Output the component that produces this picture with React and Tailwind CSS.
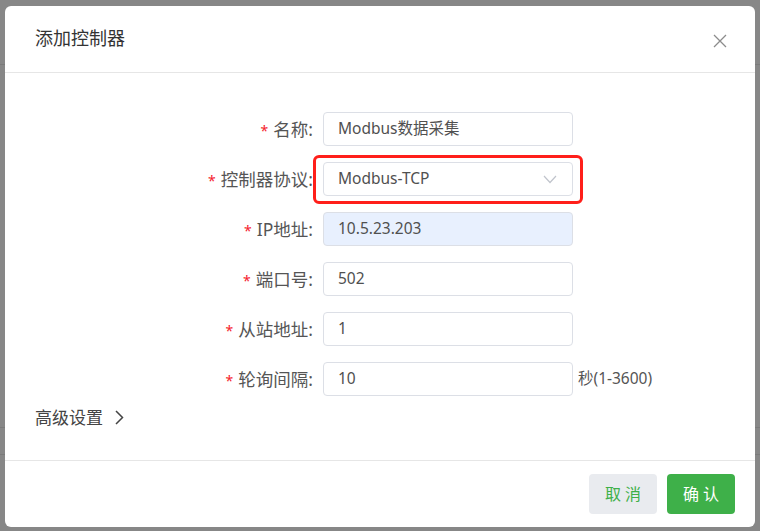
import React from 'react'

const font = { fontFamily: '"Noto Sans", "Noto Sans CJK SC", sans-serif' }

const rows = [
  { label: '名称', value: 'Modbus数据采集' },
  { label: '控制器协议', value: 'Modbus-TCP', select: true },
  { label: 'IP地址', value: '10.5.23.203', filled: true },
  { label: '端口号', value: '502' },
  { label: '从站地址', value: '1' },
  { label: '轮询间隔', value: '10', suffix: '秒(1-3600)' },
]

function Row({ row }) {
  return (
    <div className="flex items-center h-[34px]">
      <div className="w-[318px] shrink-0 flex items-center justify-end pr-[10px] text-[17.5px] text-[#555]">
        <span className="text-[#f5222d] text-[14px] mr-[5px] mt-[2px]">*</span>
        <span>{row.label}:</span>
      </div>
      <div
        className={`relative w-[250px] h-[34px] shrink-0 rounded-[4px] border border-[#dcdfe6] flex items-center pl-[14px] text-[15.5px] text-[#505050] ${
          row.filled ? 'bg-[#e8f0fe]' : 'bg-white'
        }`}
      >
        {row.value}
        {row.select && (
          <svg className="absolute right-[15px] top-[12px]" width="14" height="9" viewBox="0 0 14 9" fill="none">
            <path d="M1 1l6 6.5L13 1" stroke="#c0c4cc" strokeWidth="1.2" />
          </svg>
        )}
        {row.select && (
          <div className="absolute -left-[11px] -top-[8px] w-[270px] h-[49px] border-[3px] border-[#ff1f1a] rounded-[6px]" />
        )}
      </div>
      {row.suffix && <span className="ml-[5px] text-[15.5px] text-[#555]">{row.suffix}</span>}
    </div>
  )
}

export default function App() {
  return (
    <div className="relative h-[531px] w-[760px] bg-[#878787] overflow-hidden" style={font}>
      {/* page behind the mask */}
      <div className="flex flex-col">
        <div className="h-[65px] border-b border-[#7b7b7b]" />
        <div className="h-[363px] border-b border-[#7b7b7b]" />
        <div className="h-[27px] border-b border-[#7b7b7b]" />
      </div>

      {/* dialog */}
      <div className="absolute top-[6px] left-[5px] w-[750px] h-[521px] bg-white rounded-[6px] flex flex-col">
        <div className="h-[67px] shrink-0 flex items-center justify-between px-[30px] border-b border-[#e6e6e6]">
          <span className="text-[18px] text-[#333] mt-[-1px]">添加控制器</span>
          <svg width="14" height="14" viewBox="0 0 14 14" fill="none" className="mr-[-2px] mt-[3px]">
            <path d="M1 1l12 12M13 1L1 13" stroke="#8c8c8c" strokeWidth="1.3" />
          </svg>
        </div>

        <div className="flex-1 flex flex-col border-b border-[#e6e6e6]">
          <div className="flex flex-col gap-[16px] pt-[39px]">
            {rows.map((r) => (
              <Row key={r.label} row={r} />
            ))}
          </div>
          <div className="flex items-center mt-[9px] ml-[30px] text-[17px] text-[#444]">
            <span>高级设置</span>
            <svg className="ml-[12px]" width="9" height="15" viewBox="0 0 9 15" fill="none">
              <path d="M1 1l6.5 6.5L1 14" stroke="#444" strokeWidth="1.5" />
            </svg>
          </div>
        </div>

        <div className="h-[66px] shrink-0 flex items-start justify-end gap-[10px] pt-[13px] pr-[20px]">
          <button className="w-[68px] h-[40px] rounded-[4px] bg-[#e9ebef] text-[#3eb049] text-[16px] tracking-[4px] pl-[4px]">
            取消
          </button>
          <button className="w-[68px] h-[40px] rounded-[4px] bg-[#3eb049] text-white text-[16px] tracking-[4px] pl-[4px]">
            确认
          </button>
        </div>
      </div>
    </div>
  )
}
